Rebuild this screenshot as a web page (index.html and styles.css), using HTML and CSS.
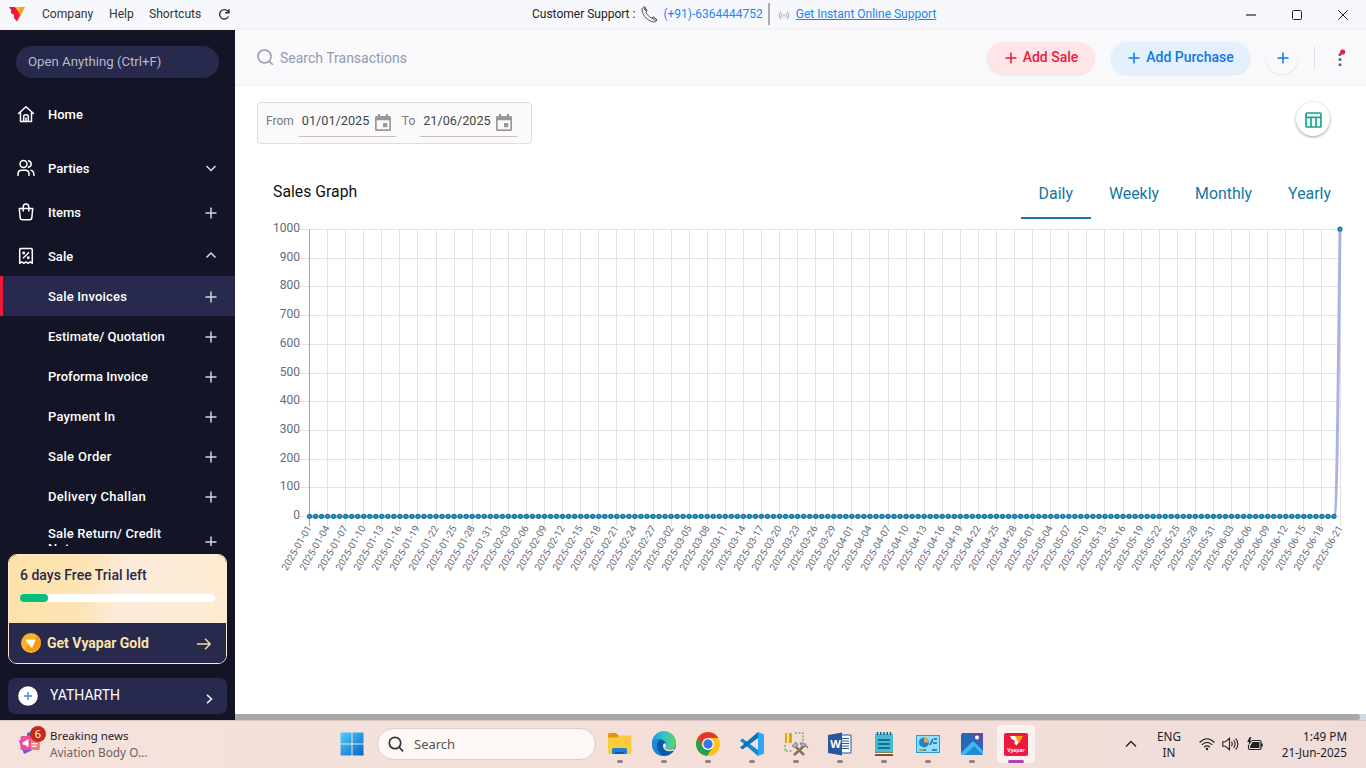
FILE: index.html
```html
<!DOCTYPE html>
<html lang="en">
<head>
<meta charset="utf-8">
<title>Vyapar</title>
<link rel="stylesheet" href="styles.css">
</head>
<body>
<svg width="0" height="0" class="defs">
  <defs>
    <symbol id="plus" viewBox="0 0 12 12"><path d="M6 .5v11M.5 6h11" fill="none" stroke="currentColor" stroke-width="1.5"/></symbol>
    <symbol id="cal" viewBox="0 0 16 17"><path d="M3 0h2v2h6V0h2v2h1.500Q16 2 16 3.500v12Q16 17 14.500 17h-13Q0 17 0 15.500v-12Q0 2 1.500 2H3zM1.700 6.300v9h12.600v-9zM8 9h4.300v4.300H8z" fill="#999" fill-rule="evenodd"/></symbol>
  </defs>
</svg>

<header class="titlebar">
  <nav class="menu">
    <svg class="logo" width="16" height="15" viewBox="0 0 16 15"><path d="M0 0h8l4 7-4 7.500L5 11V8L2 6V3z" fill="#ed1a3b"/><path d="M6 0h10l-5 10-1-4z" fill="#f9a01b"/><path d="M6 0h5v5z" fill="#fbb834"/></svg>
    <span class="m-company">Company</span><span class="m-help">Help</span><span class="m-short">Shortcuts</span>
    <svg width="13" height="13" viewBox="0 0 13 13" fill="none" stroke="#333" stroke-width="1.400"><path d="M10.500 8.500A4.700 4.700 0 1 1 9.800 3.200L10.800 4.600M11 1v3.800H7.200"/></svg>
  </nav>
  <div class="support">
    <span>Customer Support :</span>
    <svg class="phone" width="17" height="17" viewBox="0 0 17 17" fill="none" stroke="#555" stroke-width="1"><path d="M3.500.8C2 1 .8 2.300 1 4c.6 5.800 6 11.300 11.800 12 1.500.1 2.700-.8 3.200-2.200L12.600 11l-2 1C8 10.800 6 8.800 5 6.300l1-1.600zM3.500.8L6 4.700M3 2l2 3.600M12.600 11l3.400 2.800M11 12l4.200 2.800"/></svg>
    <span class="tel">(+91)-6364444752</span>
    <i class="bar"></i>
    <svg class="live" width="12" height="9" viewBox="0 0 12 9" fill="none" stroke="#9a9db0" stroke-width="1"><path d="M2.500.8Q0 4.500 2.500 8.200M4.300 2.500Q3 4.500 4.300 6.500M9.500.8Q12 4.500 9.500 8.200M7.700 2.500Q9 4.500 7.700 6.500M5.500 4.500h1"/></svg>
    <a class="online">Get Instant Online Support</a>
  </div>
  <div class="winbtns">
    <svg width="10" height="10" viewBox="0 0 10 10"><path d="M0 5h10" stroke="#222" stroke-width="1.200"/></svg>
    <svg width="10" height="10" viewBox="0 0 10 10"><rect x=".5" y=".5" width="9" height="9" rx="1" fill="none" stroke="#222"/></svg>
    <svg width="10" height="10" viewBox="0 0 10 10"><path d="M.3.3l9.400 9.400M9.700.3L.3 9.700" stroke="#222"/></svg>
  </div>
</header>

<div class="app">
  <aside class="side">
    <div class="nav">
      <div class="open">Open Anything (Ctrl+F)</div>
      <div class="item home"><svg width="20" height="20" viewBox="0 0 20 20" fill="none" stroke="#fff" stroke-width="1.500" stroke-linejoin="round" stroke-linecap="round"><path d="M2.500 9.500L10 2.800l7.500 6.700M4.500 8.500V17.500h11V8.500M7.700 17v-4.500q0-1.700 2.300-1.700t2.300 1.700v4.500M10 14v3"/></svg><span>Home</span></div>
      <div class="item"><svg width="20" height="20" viewBox="0 0 20 20" fill="none" stroke="#fff" stroke-width="1.500" stroke-linecap="round"><circle cx="7.500" cy="6" r="3.500"/><path d="M2 17.500v-1.500q0-3.700 3.700-3.700h3.600q3.700 0 3.700 3.700v1.500M12.500 2.800q2.700.8 2.700 3.200t-2.700 3.200M15 12.300q3 .7 3 5.200"/></svg><span>Parties</span><svg class="act" width="12" height="12" viewBox="0 0 12 12" fill="none" stroke="#ddd" stroke-width="1.500"><path d="M1.500 4L6 8.500 10.500 4"/></svg></div>
      <div class="item"><svg width="20" height="20" viewBox="0 0 20 20" fill="none" stroke="#fff" stroke-width="1.500" stroke-linejoin="round" stroke-linecap="round"><path d="M3.300 6.500h13.400L15.800 16q-.3 1.700-2 1.700H6.200q-1.700 0-2-1.700zM7.200 9V5q0-3 2.800-3T12.800 5v4"/></svg><span>Items</span><svg class="act low" width="12" height="12"><use href="#plus"/></svg></div>
      <div class="item sale"><svg width="20" height="20" viewBox="0 0 20 20" fill="none" stroke="#fff" stroke-width="1.500" stroke-linejoin="round"><path d="M3.700 17.300V3.700q0-1.200 1.200-1.200h10.200q1.200 0 1.200 1.200v13.600l-2.100-1.500-2.100 1.500-2.100-1.500-2.100 1.500-2.100-1.500zM7 12.300l6-6"/><circle cx="7.700" cy="7" r=".7"/><circle cx="12.300" cy="11.700" r=".7"/></svg><span>Sale</span><svg class="act" width="12" height="12" viewBox="0 0 12 12" fill="none" stroke="#ddd" stroke-width="1.500"><path d="M1.500 7.500L6 3l4.500 4.500"/></svg></div>
      <div class="sub active"><span class="wide">Sale Invoices</span><svg class="act" width="12" height="12"><use href="#plus"/></svg></div>
      <div class="sub"><span>Estimate/ Quotation</span><svg class="act" width="12" height="12"><use href="#plus"/></svg></div>
      <div class="sub"><span>Proforma Invoice</span><svg class="act" width="12" height="12"><use href="#plus"/></svg></div>
      <div class="sub"><span class="wide">Payment In</span><svg class="act" width="12" height="12"><use href="#plus"/></svg></div>
      <div class="sub"><span class="wider">Sale Order</span><svg class="act" width="12" height="12"><use href="#plus"/></svg></div>
      <div class="sub"><span class="wider">Delivery Challan</span><svg class="act" width="12" height="12"><use href="#plus"/></svg></div>
      <div class="sub tall"><span class="wide">Sale Return/ Credit Note</span><svg class="act" width="12" height="12"><use href="#plus"/></svg></div>
    </div>
    <div class="promo">
      <div class="trial"><b>6 days Free Trial left</b><div class="track"><div class="fill"></div></div></div>
      <div class="gold"><svg width="20" height="20" viewBox="0 0 20 20"><circle cx="10" cy="10" r="10" fill="#fbb12b"/><path d="M4 16A10 10 0 0 0 20 10 10 10 0 0 0 16.500 2.500z" fill="#f59a12"/><path d="M5 6.500h10L11 15l-2.500-2v-2L6 10z" fill="#fff"/></svg><b>Get Vyapar Gold</b><svg class="arrow" width="14" height="12" viewBox="0 0 14 12" fill="none" stroke="#f7dc9f" stroke-width="1.400"><path d="M0 6h13M8 .8L13.200 6 8 11.200"/></svg></div>
    </div>
    <div class="account"><svg width="20" height="20" viewBox="0 0 20 20"><circle cx="10" cy="10" r="9.800" fill="#fff"/><path d="M10 6v8M6 10h8" stroke="#2f8df0" stroke-width="1.400"/></svg><span>YATHARTH</span><svg class="chev" width="7" height="10" viewBox="0 0 7 10" fill="none" stroke="#eee" stroke-width="1.600"><path d="M1 .8L5.500 5 1 9.200"/></svg></div>
  </aside>

  <main class="main">
    <div class="topbar">
      <svg width="17" height="17" viewBox="0 0 17 17" fill="none" stroke="#9797b8" stroke-width="1.600"><circle cx="7.500" cy="7.500" r="6.500"/><path d="M12.200 12.200l3.600 3.600"/></svg>
      <span class="ph">Search Transactions</span>
      <div class="btn red"><svg width="12" height="12"><use href="#plus"/></svg><span>Add Sale</span></div>
      <div class="btn blue"><svg width="12" height="12"><use href="#plus"/></svg><span>Add Purchase</span></div>
      <div class="btn round"><svg width="12" height="12"><use href="#plus"/></svg></div>
      <i class="sep"></i>
      <svg class="kebab" width="10" height="20" viewBox="0 0 10 20"><g fill="#606070"><circle cx="3" cy="6.500" r="1.500"/><circle cx="3" cy="11.500" r="1.500"/><circle cx="3" cy="16.700" r="1.500"/></g><circle cx="5.600" cy="4" r="2.600" fill="#ed1a3b"/></svg>
    </div>
    <div class="content">
      <div class="filters">
        <div class="dates">
          <span>From</span><div class="date"><span>01/01/2025</span><svg width="16" height="17"><use href="#cal"/></svg></div>
          <span class="to">To</span><div class="date"><span>21/06/2025</span><svg width="16" height="17"><use href="#cal"/></svg></div>
        </div>
        <div class="tablebtn"><svg width="17" height="16" viewBox="0 0 17 16" fill="none" stroke="#1aa58c" stroke-width="1.700"><rect x="1" y="1" width="15" height="14" rx="1"/><path d="M1 5.300h15M6 5.300V15M11 5.300V15"/></svg></div>
      </div>
      <div class="charthead">
        <h1>Sales Graph</h1>
        <div class="tabs"><span class="on">Daily</span><span>Weekly</span><span>Monthly</span><span>Yearly</span></div>
      </div>
      <svg id="chart" class="chart" width="1131" height="370" viewBox="235 219 1131 370"></svg>
    </div>
    <div class="hscroll"><div class="thumb"></div></div>
  </main>
</div>

<footer class="taskbar">
  <div class="news">
    <div class="newsicon">
      <svg width="24" height="26" viewBox="0 0 24 26"><path d="M1 11l16-8 4 14-15 7z" fill="#7b4df0"/><path d="M9 3l8-3v8H9z" fill="#2a7be0"/><rect x="2.500" y="6" width="19" height="14" rx="1.500" fill="#ee4d8f"/><path d="M13 6h7.500q1 0 1 1v12q0 1-1 1h-7.500z" fill="#f87a72"/><path d="M4.500 12.500l6-3.500v8l-3.500-2-2.500-.5zM13.500 13h6v1.300h-6zM13.500 15.800h5v1.300h-5z" fill="#fff"/></svg>
      <span class="count">6</span>
    </div>
    <div class="newstext"><span>Breaking news</span><small>Aviation Body O...</small></div>
  </div>
  <svg class="win" width="24" height="24" viewBox="0 0 24 24"><defs><linearGradient id="w" x1="0" y1="0" x2="1" y2="1"><stop offset="0" stop-color="#4fcfff"/><stop offset="1" stop-color="#0067c7"/></linearGradient></defs><path d="M.5.5h11v11H.5zM12.500.5h11v11h-11zM.5 12.500h11v11H.5zM12.500 12.500h11v11h-11z" fill="url(#w)"/></svg>
  <div class="search"><svg width="16" height="16" viewBox="0 0 16 16" fill="none" stroke="#333" stroke-width="1.700"><circle cx="7" cy="7" r="5.700"/><path d="M11 11l4 4.300"/></svg>Search</div>
  <div class="apps">
    <div class="appi"><svg width="26" height="26" viewBox="0 0 26 26"><path d="M1 3.500Q1 2 2.500 2H9l2.500 2.500V8H1z" fill="#dc9a08"/><path d="M1 6.500h10L13 4.500h11.500v17q0 1.500-1.500 1.500H2.500Q1 23 1 21.500z" fill="#fccb3c"/><path d="M5 23v-4.500Q5 17 6.500 17h12q1.500 0 1.500 1.500V23z" fill="#1d7fd6"/><path d="M8 21h9v2H8z" fill="#0c5ba8"/></svg></div>
    <div class="appi"><svg width="26" height="26" viewBox="0 0 26 26"><defs><linearGradient id="e" x1="0" y1=".3" x2="1" y2=".3"><stop offset="0" stop-color="#189bde"/><stop offset=".5" stop-color="#35c1c5"/><stop offset="1" stop-color="#62d65a"/></linearGradient></defs><circle cx="13" cy="13" r="12" fill="#0f58a8"/><path d="M1 12A12 12 0 0 1 25 12q0 6-6 6.500-5 0-4.500-2.500 2-2 .5-4Q12 7.500 6 8.500 2.500 9 1 12z" fill="url(#e)"/><path d="M1 12Q3 7.500 9 8.500q-3 2-3 6.500 0 6 6 9.900Q1 24 1 12z" fill="#1989db"/><path d="M13.500 12q-2.500 1.500-1 5 3 5 10.500 2.500l1-2q-3 1.500-6 1-4.500-.5-3.500-2.500 2-2-1-4z" fill="#f5e3dd"/></svg></div>
    <div class="appi"><svg width="26" height="26" viewBox="0 0 26 26"><circle cx="13" cy="13" r="12" fill="#fcc31e"/><path d="M2.600 7A12 12 0 0 1 23.400 7H13L8 16z" fill="#e2382d"/><path d="M2.600 7A12 12 0 0 0 12 25l6-9H8z" fill="#2a9f4b"/><circle cx="13" cy="13" r="6" fill="#fff"/><circle cx="13" cy="13" r="4.700" fill="#3977e8"/></svg></div>
    <div class="appi"><svg width="26" height="26" viewBox="0 0 26 26"><path d="M1 9.500L3.500 7.500 19 19v6z" fill="#1386cd"/><path d="M1 16.500l2.500 2L19 7V1z" fill="#0873b8"/><path d="M19 1l6 2.500v19L19 25z" fill="#2aa7f4"/></svg></div>
    <div class="appi"><svg width="26" height="26" viewBox="0 0 26 26"><path d="M2 2h7v10H2z" fill="#dfa51c"/><path d="M4 2h2v10H4z" fill="#fbe58a"/><path d="M12 2h8v9M2 14v6h8" fill="none" stroke="#35914a" stroke-dasharray="2 1.500"/><path d="M11 14l10 10M22 14L11 24" stroke="#8b7058" stroke-width="2.500"/><path d="M9 15l4-4 2 3-3 3zM17 12q6-1 8 5l-3-2-3 1z" fill="#a9b4c0" stroke="#667" stroke-width=".7"/></svg></div>
    <div class="appi"><svg width="26" height="26" viewBox="0 0 26 26"><path d="M12 4h12v18H12z" fill="#fff" stroke="#2b579a"/><path d="M15 7.500h7M15 10h7M15 12.500h7M15 15h7M15 17.500h7" stroke="#2b579a"/><path d="M1 4l14-2.500v23L1 22z" fill="#2b579a"/><text x="3.200" y="17" class="wletter">W</text></svg></div>
    <div class="appi"><svg width="26" height="26" viewBox="0 0 26 26"><path d="M4 21h18v4H4z" fill="#8f4b13"/><path d="M4 22h18v1H4z" fill="#fff"/><path d="M4 3h18v18.500H4z" fill="#45bcd4"/><path d="M7 9h12M7 13h12M7 17h12" stroke="#0d5774" stroke-width="1.600"/><path d="M6.500 1v3M9.700 1v3M13 1v3M16.300 1v3M19.500 1v3" stroke="#19637c" stroke-width="1.500"/></svg></div>
    <div class="appi"><svg width="26" height="26" viewBox="0 0 26 26"><rect x="1.500" y="4.500" width="23" height="17" fill="#8fe1fb" stroke="#2a9bdc"/><circle cx="9" cy="11.500" r="5" fill="#1b83d0"/><path d="M9 11.500v-5a5 5 0 0 1 5 5z" fill="#f6a52a"/><path d="M15 14l3-6M19 8h3M18 12h4M4 19h7M17 19h5" stroke="#1465b0" stroke-width="1.500"/><path d="M4 19h5" stroke="#f29a21" stroke-width="1.500"/></svg></div>
    <div class="appi"><svg width="26" height="26" viewBox="0 0 26 26"><rect x="2" y="2" width="22" height="22" rx="2" fill="#2868b9"/><path d="M11 2h13v13z" fill="#5650aa"/><path d="M2 22L13 11q1.200-1 2.400 0L24 20v2q0 2-2 2H4q-2 0-2-2z" fill="#40b9ec"/><path d="M6 24l9-9 9 9z" fill="#2389d5"/><circle cx="18" cy="6.500" r="2" fill="#fff"/></svg></div>
    <div class="appi current"><svg width="26" height="26" viewBox="0 0 26 26"><rect x="1" y="2" width="24" height="23" rx="2" fill="#ed1a3b"/><path d="M7 5h8l2 4-3.500 5.500-2-2v-3L8.500 8z" fill="#fff"/><path d="M12 5h8l-4 7.500z" fill="#f9a01b"/><text x="13" y="20.500" text-anchor="middle" class="vletter">Vyapar</text></svg></div>
  </div>
  <div class="tray">
    <svg width="12" height="8" viewBox="0 0 12 8" fill="none" stroke="#222" stroke-width="1.400"><path d="M1 6.500l5-5 5 5"/></svg>
    <div class="lang"><span>ENG</span><span>IN</span></div>
    <svg class="wifi" width="16" height="14" viewBox="0 0 16 14" fill="none" stroke="#222" stroke-width="1.200"><path d="M.6 5.500q7.400-7.500 14.800 0M2.800 7.900q5.200-5 10.400 0M5.200 10.200q2.800-2.600 5.600 0"/><circle cx="8" cy="12" r="1.200" fill="#222" stroke="none"/></svg>
    <svg class="vol" width="17" height="14" viewBox="0 0 17 14" fill="none" stroke="#222" stroke-width="1.100"><path d="M.8 4.800h2.600L7.500 1.300v11.400L3.400 9.200H.8zM9.500 4.800q1.500 2.200 0 4.400M11.600 3q3 4 0 8M13.700 1.300q4.300 5.700 0 11.400"/></svg>
    <svg class="batt" width="16" height="14" viewBox="0 0 16 14"><path d="M5 3.500h7.500q1.500 0 1.500 1.500v6q0 1.500-1.500 1.500H3q-1.500 0-1.500-1.500V8" fill="none" stroke="#222" stroke-width="1.200"/><path d="M5.500 5h7v6H3.200V9zM14 6.500h1.800v3H14zM2.500.3L.2 5h2L1.500 8.500 5 3.700H3.200L4.500.3z" fill="#222"/></svg>
    <div class="clock"><span>1:49 PM</span><span>21-Jun-2025</span></div>
  </div>
</footer>
<script src="chart.js"></script>
</body>
</html>
```
FILE: styles.css
```css
* { box-sizing: border-box; }
body { margin: 0; width: 1366px; height: 768px; overflow: hidden; display: flex; flex-direction: column; font-family: Roboto, sans-serif; font-size: 14px; background: #fff; }
svg { display: block; flex: none; }
span, b { white-space: nowrap; }
.defs { position: absolute; }

.titlebar { height: 30px; flex: none; display: flex; align-items: center; background: #f7f8fc; border-bottom: 2px solid #f2f2f4; font-size: 12.1px; color: #333; }
.menu { display: flex; align-items: center; width: 532px; padding-left: 9px; }
.m-company { margin-left: 17px; width: 67px; }
.m-help { width: 40px; }
.m-short { width: 69px; }
.support { display: flex; align-items: center; flex: 1; color: #222; font-size: 12px; }
.phone { margin: 1px 5px 0 6px; }
.tel { color: #2684f5; }
.bar { width: 2px; height: 22px; background: #aaabae; margin-left: 5px; }
.live { margin: 2px 6px 0 8px; }
.online { color: #1b85ec; text-decoration: underline; }
.winbtns { display: flex; gap: 36px; padding: 2px 18px 0 0; }

.app { display: flex; height: 690px; flex: none; }
.side { width: 235px; background: #131426; color: #fff; font-weight: 500; font-size: 13px; }
.nav { height: 516px; overflow: hidden; padding-top: 16px; }
.open { width: 203px; height: 32px; margin: 0 0 14px 16px; border-radius: 16px; background: #27294d; color: #b9bacb; font-weight: 400; font-size: 13.2px; line-height: 32px; padding-left: 12px; }
.item { height: 44px; display: flex; align-items: center; padding: 0 18px 0 16px; }
.item span { margin-left: 12px; }
.home { margin-bottom: 10px; }
.sale { height: 42px; padding-top: 2px; }
.act { margin-left: auto; color: #d4d4dc; }
.low { margin-top: 2px; }
.wide { letter-spacing: .17px; }
.wider { letter-spacing: .3px; }
.sub { height: 40px; display: flex; align-items: center; padding: 0 18px 0 48px; }
.sub .act { margin-top: 2px; }
.active { background: #27294d; border-left: 3px solid #ed1a3b; padding-left: 45px; }
.tall { height: 50px; line-height: 15.5px; }
.tall span { white-space: normal; width: 125px; }
.promo { margin: 8px 8px 0; height: 110px; border: 1px solid #fdebd0; border-radius: 9px; overflow: hidden; }
.trial { height: 68px; padding: 12px 11px 0; background: linear-gradient(100deg, #fde2a8 0%, #fce4b4 35%, #fcebdb 52%, #fdebd0 100%); color: #27294d; font-size: 14px; }
.trial b { display: block; font-weight: 500; line-height: 16px; }
.track { height: 8px; margin-top: 11px; border-radius: 4px; background: #fff; }
.fill { width: 28px; height: 8px; border-radius: 4px; background: #08bd80; }
.gold { height: 41px; background: #27294d; display: flex; align-items: center; padding: 0 15px 1px 12px; color: #fbe3aa; font-size: 14px; }
.gold b { margin: 0 auto 0 6px; }
.arrow { margin-top: 2px; }
.account { height: 36px; margin: 14px 8px 0; border-radius: 7px; background: #27294d; display: flex; align-items: center; padding: 0 14px 0 10px; font-size: 14px; font-weight: 400; }
.account span { margin: 0 auto 2px 12px; }
.chev { margin-top: 5px; }

.main { width: 1131px; display: flex; flex-direction: column; }
.topbar { height: 56px; background: #f9f9fc; border-bottom: 1px solid #f1f1f4; display: flex; align-items: center; padding: 0 20px 0 22px; }
.ph { margin: 0 auto 0 6px; color: #9698ae; font-size: 14px; }
.btn { height: 32px; border-radius: 16px; display: flex; align-items: center; justify-content: center; gap: 6px; padding-left: 1px; font-weight: 500; font-size: 14px; box-shadow: 0 1px 2px rgba(0,0,0,.09); }
.btn span { margin-bottom: 2px; }
.red { width: 108px; background: #ffe4e8; color: #ed1a3b; margin-right: 16px; }
.blue { width: 139px; background: #e3f1ff; color: #1177e8; margin-right: 16px; }
.round { width: 32px; color: #1177e8; }
.sep { width: 1px; height: 24px; background: #e0e0e6; margin: 0 22px 0 16px; }
.kebab { margin-right: -1px; }

.content { flex: 1; }
.filters { display: flex; justify-content: space-between; align-items: flex-start; padding: 16px 36px 0 22px; height: 76px; }
.dates { width: 275px; height: 42px; border: 1px solid #ddd; border-radius: 4px; background: #fafafa; display: flex; align-items: center; padding: 0 0 5px 8px; font-size: 12px; color: #777; }
.date { display: flex; align-items: center; height: 28px; width: 99px; margin: 4px 5px 0 4px; padding: 0 6px 4px 4px; border-bottom: 1px solid #cdbab0; border-radius: 2px; justify-content: space-between; font-size: 12.7px; color: #444; }
.date svg { margin-top: 5px; }
.tablebtn { width: 34px; height: 34px; border-radius: 50%; background: #fff; box-shadow: 0 1px 3px rgba(0,0,0,.4); display: flex; align-items: center; justify-content: center; padding-top: 2px; }
.charthead { display: flex; justify-content: space-between; padding: 0 17px 0 38px; height: 57px; }
.charthead h1 { margin: 20px 0 0; font-size: 15.8px; font-weight: 400; line-height: 20px; color: #111; }
.tabs { display: flex; height: 57px; color: #1577a4; font-size: 15.9px; }
.tabs span { padding: 22px 18px 0; line-height: 19px; }
.tabs .on { border-bottom: 2px solid #1577a4; }
.chart { font-family: Roboto, sans-serif; }
.ylab { font-size: 12px; fill: #666a78; text-anchor: end; }
.xlab { font-size: 9.9px; fill: #666a78; text-anchor: end; }
.hscroll { height: 6px; background: #cddbe6; }
.thumb { width: 1125px; height: 6px; background: #a8a8a8; border-radius: 0 3px 3px 0; }

.taskbar { height: 48px; flex: none; display: flex; align-items: center; padding-bottom: 2px; background: linear-gradient(90deg, #f5e2dc, #f4dfd8 60%, #f0ddda); border-top: 1px solid #d9c7c2; font-family: "Noto Sans", sans-serif; color: #222; font-size: 12px; }
.news { display: flex; width: 340px; padding-left: 18px; }
.newsicon { position: relative; width: 32px; padding-top: 2px; }
.count { position: absolute; left: 12px; top: -2px; width: 16px; height: 16px; border-radius: 50%; background: #c42b1c; color: #fff; text-align: center; line-height: 16px; font-size: 11px; }
.newstext { display: flex; flex-direction: column; line-height: 16px; font-size: 11.4px; }
.newstext small { font-size: 11.8px; color: #6c625f; }
.search { width: 219px; height: 32px; margin-left: 13px; border: 1px solid #dccbc6; border-radius: 16px; background: #fdf8f6; display: flex; align-items: center; gap: 10px; padding-left: 10px; font-size: 13px; color: #555; }
.apps { display: flex; margin-left: 2px; }
.appi { width: 38px; height: 38px; margin: 0 3px; padding: 6px; position: relative; border-radius: 4px; }
.appi::after { content: ""; position: absolute; left: 16px; bottom: 0; width: 6px; height: 3px; border-radius: 2px; background: #8d8481; }
.current { background: #fbf2ef; }
.current::after { left: 11px; width: 16px; background: #ad46bd; }
.wletter { font: bold 11px "Open Sans", sans-serif; fill: #fff; }
.vletter { font: bold 5px "Noto Sans", sans-serif; fill: #fff; }
.tray { display: flex; align-items: center; margin-left: auto; padding-right: 19px; }
.lang, .clock { display: flex; flex-direction: column; line-height: 16px; font-size: 11.7px; }
.lang { width: 32px; margin: 0 14px 0 16px; align-items: center; }
.vol { margin-left: 7px; }
.batt { margin-left: 8px; }
.clock { width: 84px; align-items: flex-end; }
```
FILE: chart.js
```js
(function () {
  const svg = document.getElementById('chart');
  const left = 309.5, right = 1340, top = 229.5, bottom = 516.5, days = 171;
  const step = (right - left) / days;
  const start = Date.UTC(2025, 0, 1);
  let out = '';
  for (let v = 0; v <= 10; v++) {
    const y = Math.round(bottom - (bottom - top) * v / 10 - 0.5) + 0.5;
    out += `<path d="M300 ${y}H${right}" stroke="#e2e2e2"/>`;
    out += `<text class="ylab" x="300" y="${y + 2.5}">${v * 100}</text>`;
  }
  for (let d = 0; d <= days; d += 3) {
    const x = Math.floor(left + d * step) + 0.5;
    const label = new Date(start + d * 86400000).toISOString().slice(0, 10);
    out += `<path d="M${x} ${top}V526" stroke="${d ? '#e2e2e2' : '#a5a5a5'}"/>`;
    out += `<text class="xlab" transform="translate(${x + 2.5} 528) rotate(-60)">${label}</text>`;
  }
  out += `<path d="M${left} ${bottom}H${right - step}C${right - 3} ${bottom} ${right - 2} 400 ${right} ${top}" fill="none" stroke="#a9b2e3" stroke-width="3"/>`;
  for (let d = 0; d <= days; d++) {
    out += `<circle cx="${left + d * step}" cy="${d === days ? top - 0.5 : bottom - 0.2}" r="1.800" fill="#55a5cb" stroke="#0f78a5" stroke-width="1.600"/>`;
  }
  svg.innerHTML = out;
})();
```
